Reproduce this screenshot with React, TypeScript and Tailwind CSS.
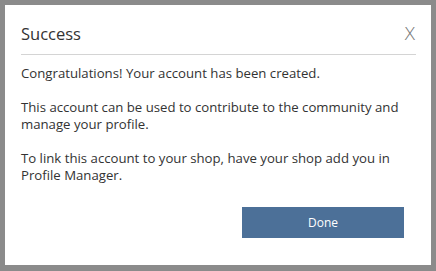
import React from 'react';

export default function App() {
  return (
    <div className="w-[436px] h-[271px] bg-[#8b8b8b] p-[5px] overflow-hidden font-['Open_Sans',sans-serif]">
      <div className="w-[426px] h-[260px] bg-white flex flex-col pl-[16px] pr-[15px] pt-[15px] text-[#333]">
        {/* Header */}
        <div className="flex items-start justify-between border-b border-[#d4d4d4] pb-[6px]">
          <h2 className="text-[16.5px] leading-[28px] text-[#333]">Success</h2>
          <button className="text-[19px] leading-[24px] text-[#777] font-light mt-[1px] mr-[1px]">X</button>
        </div>

        {/* Body */}
        <div className="pt-[10px] text-[13.2px] leading-[17.5px] flex flex-col gap-[16px] pr-[4px]">
          <p>Congratulations! Your account has been created.</p>
          <p>This account can be used to contribute to the community and manage your profile.</p>
          <p>To link this account to your shop, have your shop add you in Profile Manager.</p>
        </div>

        {/* Footer */}
        <div className="flex justify-end mt-auto mb-[27px] mr-[12px]">
          <button className="w-[162px] h-[31px] bg-[#4c7098] text-white text-[12px]">Done</button>
        </div>
      </div>
    </div>
  );
}
